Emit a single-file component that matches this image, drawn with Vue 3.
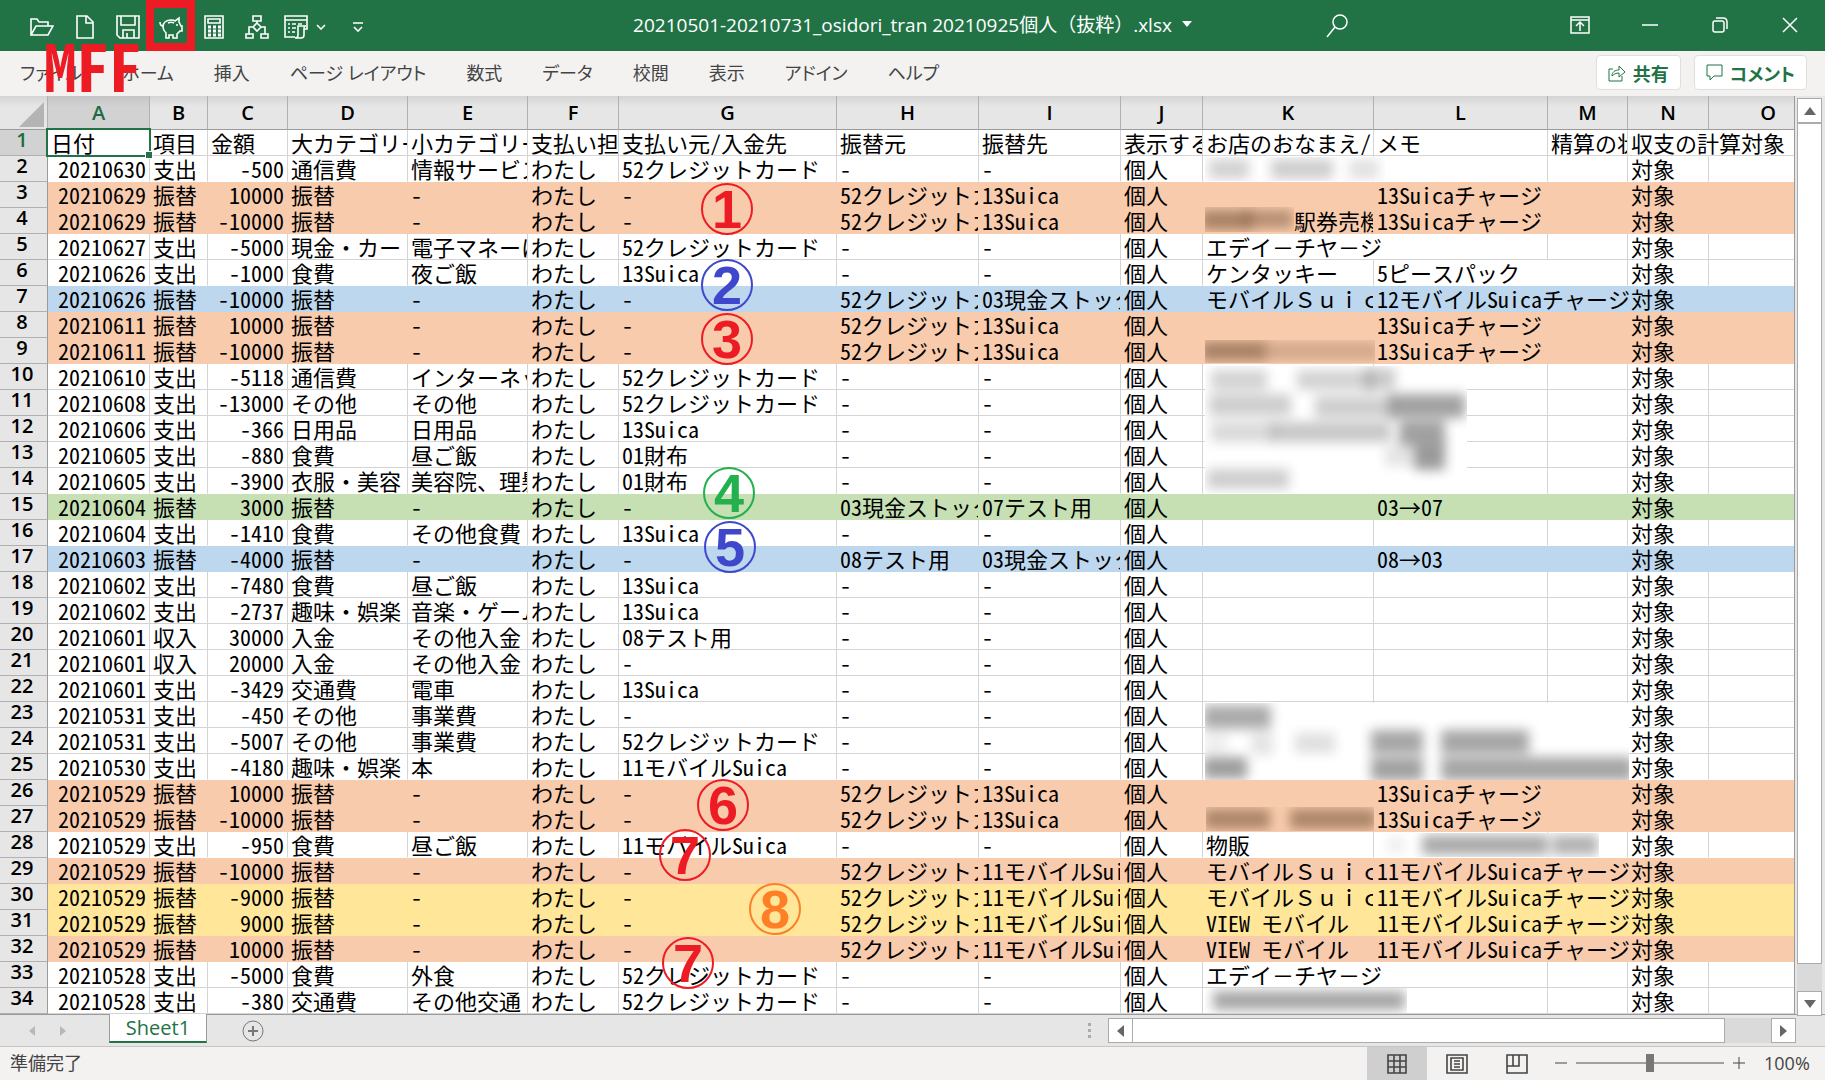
<script setup>
const tabs = ['ファイル', 'ホーム', '挿入', 'ページ レイアウト', '数式', 'データ', '校閲', '表示', 'アドイン', 'ヘルプ']

const columns = [
  ['A', 102], ['B', 58], ['C', 80], ['D', 120], ['E', 120], ['F', 91], ['G', 218], ['H', 142],
  ['I', 142], ['J', 82], ['K', 171], ['L', 174], ['M', 80], ['N', 81], ['O', 0]
].map(([name, width]) => ({ name, width }))

const CARD = '52クレジットカード'
const MOBILE = '11モバイルSuica'
const STOCK = '03現金ストック'
const CHARGE = '13Suicaチャージ'
const MCHARGE = '11モバイルSuicaチャージ'

const header = ['日付', '項目', '金額', '大カテゴリー', '小カテゴリー', '支払い担当', '支払い元/入金先', '振替元', '振替先', '表示する', 'お店のおなまえ/メモ', 'メモ', '精算の状態', '収支の計算対象', '']

// date, kind, amount, category, subcategory, account, from, to, shop, memo, fill
const records = [
  ['20210630', '支出', '-500', '通信費', '情報サービス', CARD, '-', '-', '', '', ''],
  ['20210629', '振替', '10000', '振替', '-', '-', CARD, '13Suica', '', CHARGE, 'orange'],
  ['20210629', '振替', '-10000', '振替', '-', '-', CARD, '13Suica', '　　　　駅券売機', CHARGE, 'orange'],
  ['20210627', '支出', '-5000', '現金・カード', '電子マネーにチャージ', CARD, '-', '-', 'エデイ－チヤ－ジ', '', ''],
  ['20210626', '支出', '-1000', '食費', '夜ご飯', '13Suica', '-', '-', 'ケンタッキー', '5ピースパック', ''],
  ['20210626', '振替', '-10000', '振替', '-', '-', CARD, STOCK, 'モバイルＳｕｉｃａ', '12モバイルSuicaチャージ', 'blue'],
  ['20210611', '振替', '10000', '振替', '-', '-', CARD, '13Suica', '', CHARGE, 'orange'],
  ['20210611', '振替', '-10000', '振替', '-', '-', CARD, '13Suica', '', CHARGE, 'orange'],
  ['20210610', '支出', '-5118', '通信費', 'インターネット', CARD, '-', '-', '', '', ''],
  ['20210608', '支出', '-13000', 'その他', 'その他', CARD, '-', '-', '', '', ''],
  ['20210606', '支出', '-366', '日用品', '日用品', '13Suica', '-', '-', '', '', ''],
  ['20210605', '支出', '-880', '食費', '昼ご飯', '01財布', '-', '-', '', '', ''],
  ['20210605', '支出', '-3900', '衣服・美容', '美容院、理髪', '01財布', '-', '-', '', '', ''],
  ['20210604', '振替', '3000', '振替', '-', '-', STOCK, '07テスト用', '', '03→07', 'green'],
  ['20210604', '支出', '-1410', '食費', 'その他食費', '13Suica', '-', '-', '', '', ''],
  ['20210603', '振替', '-4000', '振替', '-', '-', '08テスト用', STOCK, '', '08→03', 'blue'],
  ['20210602', '支出', '-7480', '食費', '昼ご飯', '13Suica', '-', '-', '', '', ''],
  ['20210602', '支出', '-2737', '趣味・娯楽', '音楽・ゲーム', '13Suica', '-', '-', '', '', ''],
  ['20210601', '収入', '30000', '入金', 'その他入金', '08テスト用', '-', '-', '', '', ''],
  ['20210601', '収入', '20000', '入金', 'その他入金', '-', '-', '-', '', '', ''],
  ['20210601', '支出', '-3429', '交通費', '電車', '13Suica', '-', '-', '', '', ''],
  ['20210531', '支出', '-450', 'その他', '事業費', '-', '-', '-', '', '', ''],
  ['20210531', '支出', '-5007', 'その他', '事業費', CARD, '-', '-', '', '', ''],
  ['20210530', '支出', '-4180', '趣味・娯楽', '本', MOBILE, '-', '-', '', '', ''],
  ['20210529', '振替', '10000', '振替', '-', '-', CARD, '13Suica', '', CHARGE, 'orange'],
  ['20210529', '振替', '-10000', '振替', '-', '-', CARD, '13Suica', '', CHARGE, 'orange'],
  ['20210529', '支出', '-950', '食費', '昼ご飯', MOBILE, '-', '-', '物販', '', ''],
  ['20210529', '振替', '-10000', '振替', '-', '-', CARD, MOBILE, 'モバイルＳｕｉｃａ', MCHARGE, 'orange'],
  ['20210529', '振替', '-9000', '振替', '-', '-', CARD, MOBILE, 'モバイルＳｕｉｃａ', MCHARGE, 'yellow'],
  ['20210529', '振替', '9000', '振替', '-', '-', CARD, MOBILE, 'VIEW モバイル', MCHARGE, 'yellow'],
  ['20210529', '振替', '10000', '振替', '-', '-', CARD, MOBILE, 'VIEW モバイル', MCHARGE, 'orange'],
  ['20210528', '支出', '-5000', '食費', '外食', CARD, '-', '-', 'エデイ－チヤ－ジ', '', ''],
  ['20210528', '支出', '-380', '交通費', 'その他交通', CARD, '-', '-', '', '', '']
]

const rows = [
  { cells: header, fill: '' },
  ...records.map(([date, kind, amount, cat, sub, account, from, to, shop, memo, fill]) => ({
    cells: [date, kind, amount, cat, sub, 'わたし', account, from, to, '個人', shop, memo, '', '対象', ''],
    fill
  }))
]

const SPILL = [10, 11, 13]
function cellClass(row, r, c) {
  return {
    num: r > 0 && (c === 0 || c === 2),
    spill: SPILL.includes(c) && row.cells[c] !== '' && row.cells[c + 1] === '' && row.cells[c].length > 6
  }
}

// centre of each numbered mark, measured from the sheet's top left corner
const marks = [
  { n: 1, x: 727, y: 113, tone: 'red' },
  { n: 2, x: 727, y: 189, tone: 'indigo' },
  { n: 3, x: 727, y: 243, tone: 'red' },
  { n: 4, x: 729, y: 397, tone: 'leaf' },
  { n: 5, x: 730, y: 451, tone: 'indigo' },
  { n: 6, x: 723, y: 709, tone: 'red' },
  { n: 7, x: 685, y: 759, tone: 'red' },
  { n: 8, x: 775, y: 813, tone: 'amber' },
  { n: 7, x: 688, y: 867, tone: 'red' }
]

// redacted areas: x, y, width, height, background, blobs [x, y, width, height, opacity]
const smudges = [
  { box: [1205, 61, 180, 24], tone: 'white', blobs: [[4, 2, 40, 20, 0.2], [66, 2, 62, 20, 0.22], [144, 2, 30, 20, 0.13]] },
  { box: [1205, 111, 89, 25], tone: 'orange', blobs: [[-4, 3, 50, 20, 0.5], [40, 3, 48, 18, 0.42]] },
  { box: [1205, 244, 170, 23], tone: 'orange', blobs: [[-4, 1, 66, 20, 0.5], [62, 2, 112, 18, 0.24]] },
  {
    box: [1205, 270, 262, 127], tone: 'white',
    blobs: [
      [6, 4, 56, 20, 0.2], [92, 4, 76, 20, 0.2], [160, 2, 30, 22, 0.24],
      [4, 28, 82, 22, 0.22], [110, 30, 78, 22, 0.22], [184, 28, 76, 24, 0.42],
      [6, 56, 64, 20, 0.17], [66, 56, 120, 20, 0.25], [194, 54, 46, 26, 0.42],
      [180, 80, 34, 20, 0.12], [210, 78, 30, 26, 0.45], [2, 103, 82, 20, 0.22]
    ]
  },
  {
    box: [1205, 607, 424, 77], tone: 'white',
    blobs: [
      [-2, 2, 68, 24, 0.38], [0, 30, 22, 20, 0.08], [46, 30, 22, 22, 0.12], [90, 30, 40, 20, 0.14],
      [166, 27, 52, 24, 0.4], [236, 27, 88, 24, 0.4],
      [-2, 54, 44, 22, 0.44], [166, 54, 52, 24, 0.42], [236, 54, 192, 24, 0.4]
    ]
  },
  { box: [1206, 711, 168, 24], tone: 'orange', blobs: [[-2, 2, 66, 20, 0.48], [84, 2, 86, 20, 0.48]] },
  { box: [1378, 737, 221, 24], tone: 'white', blobs: [[10, 4, 16, 16, 0.08], [44, 2, 126, 20, 0.38], [174, 2, 46, 20, 0.34]] },
  { box: [1205, 892, 202, 25], tone: 'white', blobs: [[8, 3, 192, 19, 0.4]] }
]
</script>

<template>
  <div class="window">
    <header class="titlebar">
      <div class="quick">
        <button class="tool" aria-label="開く">
          <svg width="24" height="24" viewBox="0 0 24 24"><path d="M1 20V4h6l2 3h9v4M1 20l5-9h17l-5 9z" /></svg>
        </button>
        <button class="tool" aria-label="新規">
          <svg width="24" height="24" viewBox="0 0 24 24"><path d="M4 1h10l6 6v16H4zM13 1v7h7" /></svg>
        </button>
        <button class="tool" aria-label="保存">
          <svg width="24" height="24" viewBox="0 0 24 24"><path d="M1 1h22v22H4l-3-3zM5 1v9h14V1M7 23v-8h11v8M11 23v-5" /></svg>
        </button>
        <button class="tool marked" aria-label="マクロ">
          <svg width="24" height="24" viewBox="0 0 24 24"><path d="M1 7c0 3 1 4 3 4M4 12c0-5 4-7 8-7 2 0 3 0 4 1l4-3v4l2 4h1v5h-2l-3 3v4h-4v-3h-4v3H7v-5c-2-2-3-4-3-6zM9 8c2-1 4-1 6 0" /><circle cx="18" cy="10" r="1" fill="#fff" stroke="none" /></svg>
        </button>
        <button class="tool" aria-label="計算">
          <svg width="24" height="24" viewBox="0 0 24 24"><path d="M3 1h18v22H3zM6 4h12v4H6z" /><path d="M6 12h3m2 0h3m2 0h3M6 16h3m2 0h3m2 0h3M6 20h3m2 0h3m2 0h3" stroke-width="3" /></svg>
        </button>
        <button class="tool" aria-label="階層">
          <svg width="24" height="24" viewBox="0 0 24 24"><path d="M8 1h8v5H8zM12 6v2M12 8l4 4-4 4-4-4zM8 12H4v7M16 12h4v7M1 19h7v4H1zM16 19h7v4h-7z" /></svg>
        </button>
        <button class="tool wide" aria-label="フォーム">
          <svg width="24" height="24" viewBox="0 0 24 24"><path d="M11 22H1V1h22v10M1 5h22M4 9h2m2 0h4m2 0h4M4 13h2m2 0h4M4 17h2m2 0h3M14 20V11h8c-2 0-2 1-2 3v6c0 2-1 3-3 3h-6c2 0 3-1 3-3M20 14h3v-3" /></svg>
          <svg width="10" height="6" viewBox="0 0 10 6"><path d="M1 1l4 4 4-4" /></svg>
        </button>
        <button class="tool more" aria-label="カスタマイズ">
          <svg width="12" height="11" viewBox="0 0 12 11"><path d="M1 1h10M2 5l4 4 4-4" /></svg>
        </button>
      </div>
      <button class="title">
        20210501-20210731_osidori_tran 20210925個人（抜粋）.xlsx
        <svg width="10" height="6" viewBox="0 0 10 6"><path d="M0 0h10L5 6z" fill="#fff" stroke="none" /></svg>
      </button>
      <div class="right">
        <button class="search" aria-label="検索">
          <svg width="22" height="24" viewBox="0 0 22 24"><circle cx="14" cy="8" r="7" /><path d="M9 13L1 23" /></svg>
        </button>
        <div class="controls">
          <button aria-label="リボンの表示"><svg width="20" height="18" viewBox="0 0 20 18"><path d="M1 1h18v16H1zM1 4h18M10 15V7M6 10l4-4 4 4" /></svg></button>
          <button aria-label="最小化"><svg width="16" height="16" viewBox="0 0 16 16"><path d="M0 8h16" /></svg></button>
          <button aria-label="元に戻す"><svg width="16" height="16" viewBox="0 0 16 16"><rect x="1" y="4" width="11" height="11" rx="2" /><path d="M4 1h7q4 0 4 4v7" /></svg></button>
          <button aria-label="閉じる"><svg width="16" height="16" viewBox="0 0 16 16"><path d="M1 1l14 14M15 1L1 15" /></svg></button>
        </div>
      </div>
    </header>

    <nav class="ribbon">
      <div class="tabs">
        <button v-for="t in tabs" :key="t" class="tab">{{ t }}</button>
      </div>
      <div class="actions">
        <button class="action">
          <svg width="18" height="18" viewBox="0 0 18 18"><path d="M5 5H1v12h13v-5M4 12c0-4 3-6 7-6V2l6 6-6 5V9c-3 0-5 1-7 3z" /></svg>共有
        </button>
        <button class="action">
          <svg width="17" height="18" viewBox="0 0 17 18"><path d="M1 1h15v11H8l-4 4v-4H1z" /></svg>コメント
        </button>
      </div>
      <span class="note">MFF</span>
    </nav>

    <main class="work">
      <div class="sheet">
        <table>
          <colgroup>
            <col class="rowhead-col" />
            <col v-for="c in columns" :key="c.name" :style="c.width ? { width: c.width + 'px' } : null" />
          </colgroup>
          <thead>
            <tr>
              <th class="corner"><svg width="25" height="25" viewBox="0 0 25 25"><path d="M25 0v25H0z" /></svg></th>
              <th v-for="c in columns" :key="c.name" scope="col" :class="{ active: c.name === 'A', cut: c.name === 'O' }">{{ c.name }}</th>
            </tr>
          </thead>
          <tbody>
            <tr v-for="(row, r) in rows" :key="r" :class="row.fill && ['filled', row.fill]">
              <th scope="row" :class="{ active: r === 0 }">{{ r + 1 }}</th>
              <td v-for="(cell, c) in row.cells" :key="c" :class="cellClass(row, r, c)">{{ cell }}</td>
            </tr>
          </tbody>
        </table>
        <div class="cursor"></div>
        <div
          v-for="(s, i) in smudges" :key="'s' + i" class="smudge" :class="s.tone"
          :style="{ left: s.box[0] + 'px', top: s.box[1] + 'px', width: s.box[2] + 'px', height: s.box[3] + 'px' }"
        >
          <i
            v-for="(b, j) in s.blobs" :key="j"
            :style="{ left: b[0] + 'px', top: b[1] + 'px', width: b[2] + 'px', height: b[3] + 'px', opacity: b[4] }"
          ></i>
        </div>
        <span
          v-for="(m, i) in marks" :key="'m' + i" class="mark" :class="'mark-' + m.tone"
          :style="{ left: m.x + 'px', top: m.y + 'px' }"
        >{{ m.n }}</span>
      </div>
      <div class="vscroll">
        <button aria-label="上へ"><svg width="12" height="8" viewBox="0 0 12 8"><path d="M6 0l6 8H0z" /></svg></button>
        <div class="thumb"></div>
        <div class="track"></div>
        <button aria-label="下へ"><svg width="12" height="8" viewBox="0 0 12 8"><path d="M0 0h12L6 8z" /></svg></button>
      </div>
    </main>

    <div class="sheetbar">
      <div class="navs">
        <button aria-label="前のシート"><svg width="6" height="10" viewBox="0 0 6 10"><path d="M6 0v10L0 5z" /></svg></button>
        <button aria-label="次のシート"><svg width="6" height="10" viewBox="0 0 6 10"><path d="M0 0v10l6-5z" /></svg></button>
      </div>
      <button class="sheettab">Sheet1</button>
      <button class="add" aria-label="新しいシート">
        <svg width="22" height="22" viewBox="0 0 22 22"><circle cx="11" cy="11" r="10" /><path d="M11 6v10M6 11h10" stroke-width="2" /></svg>
      </button>
      <div class="dots"><i></i><i></i><i></i></div>
      <div class="hscroll">
        <button aria-label="左へ"><svg width="7" height="12" viewBox="0 0 7 12"><path d="M7 0v12L0 6z" /></svg></button>
        <div class="thumb"></div>
        <div class="track"></div>
        <button aria-label="右へ"><svg width="7" height="12" viewBox="0 0 7 12"><path d="M0 0v12l7-6z" /></svg></button>
      </div>
    </div>

    <footer class="status">
      <span class="ready">準備完了</span>
      <div class="views">
        <button class="on" aria-label="標準"><svg width="20" height="20" viewBox="0 0 20 20"><path d="M1 1h18v18H1zM7 1v18M13 1v18M1 7h18M1 13h18" /></svg></button>
        <button aria-label="ページ レイアウト"><svg width="22" height="20" viewBox="0 0 22 20"><path d="M1 1h20v18H1zM5 4h12v12H5zM8 7h6M8 10h6M8 13h6" /></svg></button>
        <button aria-label="改ページ プレビュー"><svg width="22" height="20" viewBox="0 0 22 20"><path d="M1 1h20v18H1zM1 12h12V1M7 1v11" /></svg></button>
      </div>
      <div class="zoom">
        <button aria-label="縮小"><svg width="12" height="12" viewBox="0 0 12 12"><path d="M0 6h12" /></svg></button>
        <input type="range" min="0" max="100" value="50" aria-label="ズーム" />
        <button aria-label="拡大"><svg width="12" height="12" viewBox="0 0 12 12"><path d="M0 6h12M6 0v12" /></svg></button>
        <span class="percent">100%</span>
      </div>
    </footer>
  </div>
</template>

<style>
body {
  background: #f3f2f1;
}
</style>

<style scoped>
.window {
  display: flex;
  flex-direction: column;
  min-height: 100vh;
  overflow: hidden;
  font-family: "Open Sans", "Noto Sans CJK JP", sans-serif;
  color: #444;
  background: #f3f2f1;
}
button {
  display: flex;
  align-items: center;
  justify-content: center;
  margin: 0;
  padding: 0;
  border: 0;
  background: none;
  font: inherit;
  color: inherit;
}
svg {
  display: block;
  flex: none;
  fill: none;
  stroke: currentColor;
}

/* title bar */
.titlebar {
  display: grid;
  grid-template-columns: 1fr auto 1fr;
  height: 51px;
  background: #217346;
  color: #fff;
}
.titlebar svg {
  stroke: #fff;
  stroke-width: 2;
}
.quick {
  display: flex;
  padding-left: 20px;
}
.quick svg {
  stroke-width: 1.6;
}
.tool {
  width: 43px;
  padding-top: 3px;
}
.quick .marked {
  position: relative;
}
.marked::after {
  content: "";
  position: absolute;
  inset: 0 -3px;
  border: 8px solid #ed1c24;
}
.quick .wide,
.quick .more {
  width: 53px;
  gap: 8px;
}
.title {
  gap: 10px;
  font-size: 19px;
  padding-bottom: 3px;
  white-space: nowrap;
}
.right {
  display: flex;
  justify-content: space-between;
}
.search {
  margin-left: 134px;
}
.titlebar .search svg,
.titlebar .controls svg {
  stroke-width: 1.5;
}
.controls {
  display: flex;
}
.controls button {
  width: 70px;
  padding-bottom: 2px;
}

/* ribbon */
.ribbon {
  position: relative;
  display: flex;
  justify-content: space-between;
  align-items: center;
  height: 45px;
  padding: 0 18px 2px 20px;
  box-sizing: border-box;
}
.tabs {
  display: flex;
  gap: 40px;
}
.tab {
  font-size: 18px;
  line-height: 30px;
  font-feature-settings: "palt";
  white-space: nowrap;
}
.actions {
  display: flex;
  gap: 13px;
}
.action {
  height: 35px;
  padding: 0 11px;
  gap: 7px;
  border: 1px solid #e1dfdd;
  border-radius: 4px;
  background: #fff;
  color: #217346;
  font-size: 18px;
  font-weight: 700;
  font-feature-settings: "palt";
  white-space: nowrap;
}
.note {
  position: absolute;
  left: 44px;
  top: -18px;
  z-index: 2;
  font-family: "Noto Sans Mono CJK JP", "Liberation Sans", sans-serif;
  font-size: 65px;
  line-height: 62px;
  font-weight: 900;
  color: #ed1c24;
}

/* worksheet */
.work {
  display: flex;
  flex: 1;
  border-bottom: 1px solid #9b9b9b;
  background: #e6e6e6;
}
.sheet {
  position: relative;
  flex: 1;
  min-width: 0;
  border-right: 1px solid #9b9b9b;
  background: #fff;
}
table {
  width: 100%;
  table-layout: fixed;
  border-collapse: separate;
  border-spacing: 0;
  font-family: "Noto Sans Mono CJK JP", "Noto Sans CJK JP", monospace;
}
.rowhead-col {
  width: 48px;
}
th {
  padding: 0;
  font-family: "Open Sans", sans-serif;
  font-size: 20px;
  font-weight: 600;
  color: #000;
  background: #e6e6e6;
}
thead th {
  height: 33px;
  line-height: 32px;
  border-right: 1px solid #b1b1b1;
  border-bottom: 1px solid #9b9b9b;
  background: linear-gradient(#d4d4d4, #e6e6e6 10px);
}
thead .active {
  background: linear-gradient(#c4c4c4, #d2d2d2 10px);
}
thead .cut {
  border-right: 0;
  padding-left: 33px;
}
.corner svg {
  margin: 3px 3px 0 auto;
  fill: #b4b4b4;
  stroke: none;
}
tbody th {
  height: 25px;
  line-height: 20px;
  vertical-align: top;
  padding-right: 3px;
  border-right: 1px solid #9b9b9b;
  border-bottom: 1px solid #b1b1b1;
}
thead .active,
tbody .active {
  color: #1e6b41;
}
tbody .active {
  background: #d2d2d2;
}
td {
  height: 25px;
  padding: 0 3px;
  border-right: 1px solid #d4d4d4;
  border-bottom: 1px solid #d4d4d4;
  font-size: 22px;
  line-height: 25px;
  color: #000;
  white-space: pre;
  overflow: hidden;
}
td:last-child {
  border-right: 0;
}
.num {
  text-align: right;
}
.spill {
  overflow: visible;
  border-right-color: transparent;
}
.filled td,
tr:has(+ .filled) td {
  border-bottom-color: transparent;
}
.filled td {
  border-right-color: transparent;
}
.orange {
  background: #f8cbad;
}
.blue {
  background: #bdd7ee;
}
.green {
  background: #c6e0b4;
}
.yellow {
  background: #ffe699;
}
.white {
  background: #fff;
}
.cursor {
  position: absolute;
  left: 46px;
  top: 32px;
  width: 101px;
  height: 25px;
  border: 2px solid #217346;
}
.cursor::after {
  content: "";
  position: absolute;
  right: -4px;
  bottom: -4px;
  width: 6px;
  height: 6px;
  border: 1px solid #fff;
  background: #217346;
}
.smudge {
  position: absolute;
  overflow: hidden;
}
.smudge i {
  position: absolute;
  background: #222;
  filter: blur(6px);
}
.smudge.orange i {
  background: #5a3a20;
}
.mark {
  position: absolute;
  box-sizing: border-box;
  width: 52px;
  height: 52px;
  margin: -26px 0 0 -26px;
  border: 2px solid currentColor;
  border-radius: 50%;
  font-family: "Liberation Sans", sans-serif;
  font-size: 54px;
  line-height: 48px;
  font-weight: 700;
  text-align: center;
}
.mark-red {
  color: #ed1c24;
}
.mark-indigo {
  color: #3f48cc;
}
.mark-leaf {
  color: #22b14c;
}
.mark-amber {
  color: #ff7f27;
}

/* scroll bars */
.vscroll {
  display: flex;
  flex-direction: column;
  width: 25px;
  margin-bottom: -2px;
  padding: 2px 3px 0 2px;
  z-index: 1;
}
.vscroll button,
.hscroll button {
  box-sizing: border-box;
  width: 25px;
  height: 25px;
  border: 1px solid #ababab;
  background: #fff;
}
.vscroll svg,
.hscroll svg,
.navs svg {
  fill: #666;
  stroke: none;
}
.thumb {
  flex: 1;
  border: 1px solid #ababab;
  background: #fff;
}
.vscroll .track {
  height: 27px;
  background: #dadada;
}
.sheetbar {
  display: flex;
  height: 31px;
  padding-right: 29px;
  border-bottom: 1px solid #c6c6c6;
  background: #e6e6e6;
}
.navs {
  display: flex;
  width: 109px;
  padding-left: 16px;
  box-sizing: border-box;
}
.navs button {
  width: 31px;
}
.navs svg {
  fill: #b8b8b8;
}
.sheettab {
  box-sizing: border-box;
  width: 98px;
  height: 29px;
  margin-top: -1px;
  border: solid #9b9b9b;
  border-width: 0 1px;
  border-bottom: 2px solid #217346;
  background: #fff;
  color: #217346;
  font-size: 20px;
  line-height: 24px;
}
.add {
  margin-left: 35px;
  color: #777;
}
.dots {
  display: flex;
  flex-direction: column;
  justify-content: center;
  gap: 3px;
  margin-left: auto;
}
.dots i {
  width: 3px;
  height: 3px;
  background: #ababab;
}
.hscroll {
  display: flex;
  width: 688px;
  height: 25px;
  margin: 3px 0 0 17px;
}
.hscroll .thumb {
  margin-left: -1px;
}
.hscroll .track {
  width: 46px;
  background: #dadada;
}

/* status bar */
.status {
  display: flex;
  height: 33px;
  font-size: 18px;
}
.ready {
  padding-left: 10px;
  line-height: 32px;
}
.views {
  display: flex;
  margin-left: auto;
}
.views button {
  width: 60px;
}
.views svg {
  stroke-width: 1.6;
}
.views .on {
  background: #cfcfcf;
}
.zoom {
  display: flex;
  align-items: center;
  padding: 0 11px 2px 8px;
}
.zoom input {
  appearance: none;
  width: 148px;
  height: 18px;
  margin: 0 9px;
  background: linear-gradient(#a0a0a0, #a0a0a0) center / 100% 2px no-repeat;
}
.zoom input::-webkit-slider-thumb {
  appearance: none;
  width: 8px;
  height: 18px;
  background: #777;
}
.percent {
  width: 50px;
  margin-left: 19px;
}
</style>
